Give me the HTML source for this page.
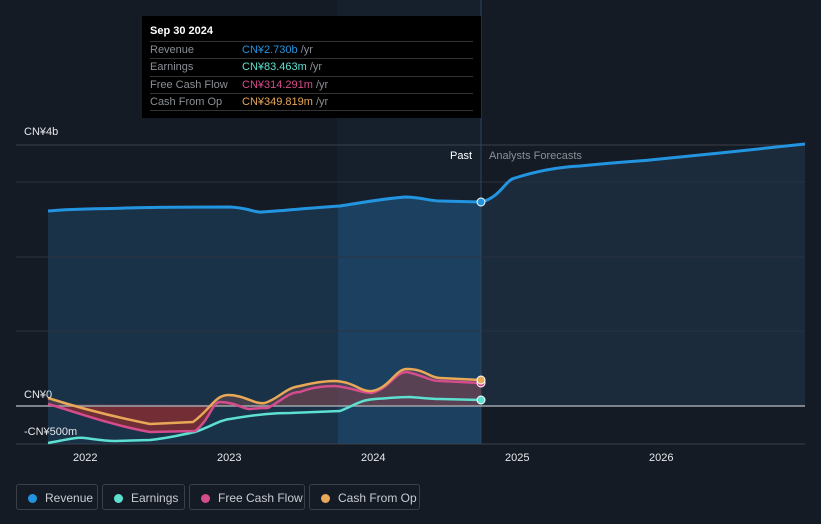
<!DOCTYPE html><html><head><style>
body{margin:0;width:821px;height:524px;background:#151b25;font-family:"Liberation Sans",sans-serif;overflow:hidden;position:relative}
.tt{position:absolute;left:142px;top:16px;width:339px;height:102px;background:#000;color:#fff;font-size:11px}
.tt .h{position:absolute;left:8px;top:9px;font-weight:bold}
.row{position:absolute;left:8px;width:323px;border-top:1px solid #333;height:17px;line-height:17px;color:#8a8f96}
.row span{position:absolute;left:92px}
.leg{position:absolute;top:484px;height:26px;border:1px solid #3a3f48;border-radius:3px;color:#c8ccd2;font-size:12px;line-height:26px;box-sizing:border-box;padding-left:28px}
.leg i{position:absolute;left:11px;top:9px;width:9px;height:9px;border-radius:50%}
.ax{position:absolute;color:#e6e8eb;font-size:11px}
</style></head><body>
<svg width="821" height="524" style="position:absolute;left:0;top:0">
<defs><linearGradient id="pf" x1="0" y1="0" x2="1" y2="0"><stop offset="0" stop-color="#1a3248"/><stop offset=".67" stop-color="#1a3248"/><stop offset=".67" stop-color="#1c4160"/><stop offset="1" stop-color="#1c4160"/></linearGradient></defs>
<rect x="337" y="0" width="144" height="444" fill="#1a2a3c" opacity=".35"/>
<path d="M48,211 C80,208 110,209 125,208 C160,207 200,207 230,207 C250,208 255,213 262,212 C290,210 310,208 340,206 C360,203 380,199 405,197 C420,197 430,201 440,201 L481,202 L481,444 L48,444Z" fill="url(#pf)"/>
<path d="M481,202 C500,198 505,180 515,178 C540,170 560,167 580,166 C620,162 640,161 650,160 C690,156 710,154 720,153 L805,144 L805,406 L481,406Z" fill="#1b2b3c"/>
<g stroke="#2a3240" stroke-width="1"><line x1="16" y1="182" x2="805" y2="182"/><line x1="16" y1="257" x2="805" y2="257"/><line x1="16" y1="331" x2="805" y2="331"/></g>
<line x1="16" y1="145" x2="805" y2="145" stroke="#3a414c"/>
<line x1="16" y1="444" x2="805" y2="444" stroke="#3a414c"/>
<line x1="481" y1="0" x2="481" y2="444" stroke="#2b4660"/>
<path d="M48,398 C70,405 100,414 150,424 L193,422 C210,410 215,395 228,395 C245,395 255,405 265,403 C280,398 285,388 300,386 C320,381 330,381 335,381 C355,382 360,392 372,391 C390,388 395,369 407,369 C425,369 430,378 440,378 L481,380 L481,406 L48,406Z" fill="#5c4a50" opacity=".6"/>
<path d="M48,404 C70,410 110,425 150,432 L195,431 C210,420 212,402 220,402 C235,402 245,410 250,409 C260,408 262,408 268,408 C285,398 290,392 300,392 C315,386 330,386 335,386 C355,388 360,393 372,393 C390,388 395,372 407,372 C425,376 430,381 440,381 L481,383 L481,406 Z" fill="#6b3b4e" opacity=".5"/>
<path d="M48,406 L48,404 C70,410 110,425 150,432 L195,431 C205,425 210,415 215,406Z" fill="#7a2a30" opacity=".8"/>
<line x1="16" y1="406" x2="805" y2="406" stroke="#a0a4aa" stroke-width="1.5"/>
<path d="M48,211 C80,208 110,209 125,208 C160,207 200,207 230,207 C250,208 255,213 262,212 C290,210 310,208 340,206 C360,203 380,199 405,197 C420,197 430,201 440,201 L481,202 C500,198 505,180 515,178 C540,170 560,167 580,166 C620,162 640,161 650,160 C690,156 710,154 720,153 L805,144" fill="none" stroke="#2394e0" stroke-width="3"/>
<path d="M48,443 C65,440 75,437 85,438 C100,440 105,441 115,441 L150,440 C170,438 180,435 195,432 C210,427 220,420 230,419 C260,414 275,413 290,413 L340,411 C355,405 360,400 375,399 C390,398 400,397 410,397 C425,398 430,399 440,399 L481,400" fill="none" stroke="#5de0d0" stroke-width="2.5"/>
<path d="M48,404 C70,410 110,425 150,432 L195,431 C210,420 212,402 220,402 C235,402 245,410 250,409 C260,408 262,408 268,408 C285,398 290,392 300,392 C315,386 330,386 335,386 C355,388 360,393 372,393 C390,388 395,372 407,372 C425,376 430,381 440,381 L481,383" fill="none" stroke="#d44c8d" stroke-width="2.5"/>
<path d="M48,398 C70,405 100,414 150,424 L193,422 C210,410 215,395 228,395 C245,395 255,405 265,403 C280,398 285,388 300,386 C320,381 330,381 335,381 C355,382 360,392 372,391 C390,388 395,369 407,369 C425,369 430,378 440,378 L481,380" fill="none" stroke="#e8a857" stroke-width="2.5"/>
<circle cx="481" cy="202" r="4" fill="#2394e0" stroke="#fff" stroke-width="1"/>
<circle cx="481" cy="400" r="4" fill="#5de0d0" stroke="#fff" stroke-width="1"/>
<circle cx="481" cy="383" r="4" fill="#d44c8d" stroke="#fff" stroke-width="1"/>
<circle cx="481" cy="380" r="4" fill="#e8a857" stroke="#fff" stroke-width="1"/>
</svg>
<div class="ax" style="left:24px;top:126px">CN¥4b</div>
<div class="ax" style="left:24px;top:389px">CN¥0</div>
<div class="ax" style="left:24px;top:426px">-CN¥500m</div>
<div class="ax" style="left:450px;top:150px;color:#fff">Past</div>
<div class="ax" style="left:489px;top:150px;color:#8a8f96">Analysts Forecasts</div>
<div class="ax" style="left:73px;top:452px">2022</div>
<div class="ax" style="left:217px;top:452px">2023</div>
<div class="ax" style="left:361px;top:452px">2024</div>
<div class="ax" style="left:505px;top:452px">2025</div>
<div class="ax" style="left:649px;top:452px">2026</div>
<div class="tt"><div class="h">Sep 30 2024</div>
<div class="row" style="top:25px">Revenue<span style="color:#2394e0">CN¥2.730b <b style="font-weight:normal;color:#8a8f96">/yr</b></span></div>
<div class="row" style="top:42px">Earnings<span style="color:#5de0d0">CN¥83.463m <b style="font-weight:normal;color:#8a8f96">/yr</b></span></div>
<div class="row" style="top:60px">Free Cash Flow<span style="color:#d44c8d">CN¥314.291m <b style="font-weight:normal;color:#8a8f96">/yr</b></span></div>
<div class="row" style="top:77px">Cash From Op<span style="color:#e8a857">CN¥349.819m <b style="font-weight:normal;color:#8a8f96">/yr</b></span></div>
<div class="row" style="top:94px;height:0"></div></div>
<div class="leg" style="left:16px;width:82px"><i style="background:#2394e0"></i>Revenue</div>
<div class="leg" style="left:102px;width:83px"><i style="background:#5de0d0"></i>Earnings</div>
<div class="leg" style="left:189px;width:116px"><i style="background:#d44c8d"></i>Free Cash Flow</div>
<div class="leg" style="left:309px;width:111px"><i style="background:#e8a857"></i>Cash From Op</div>
</body></html>
